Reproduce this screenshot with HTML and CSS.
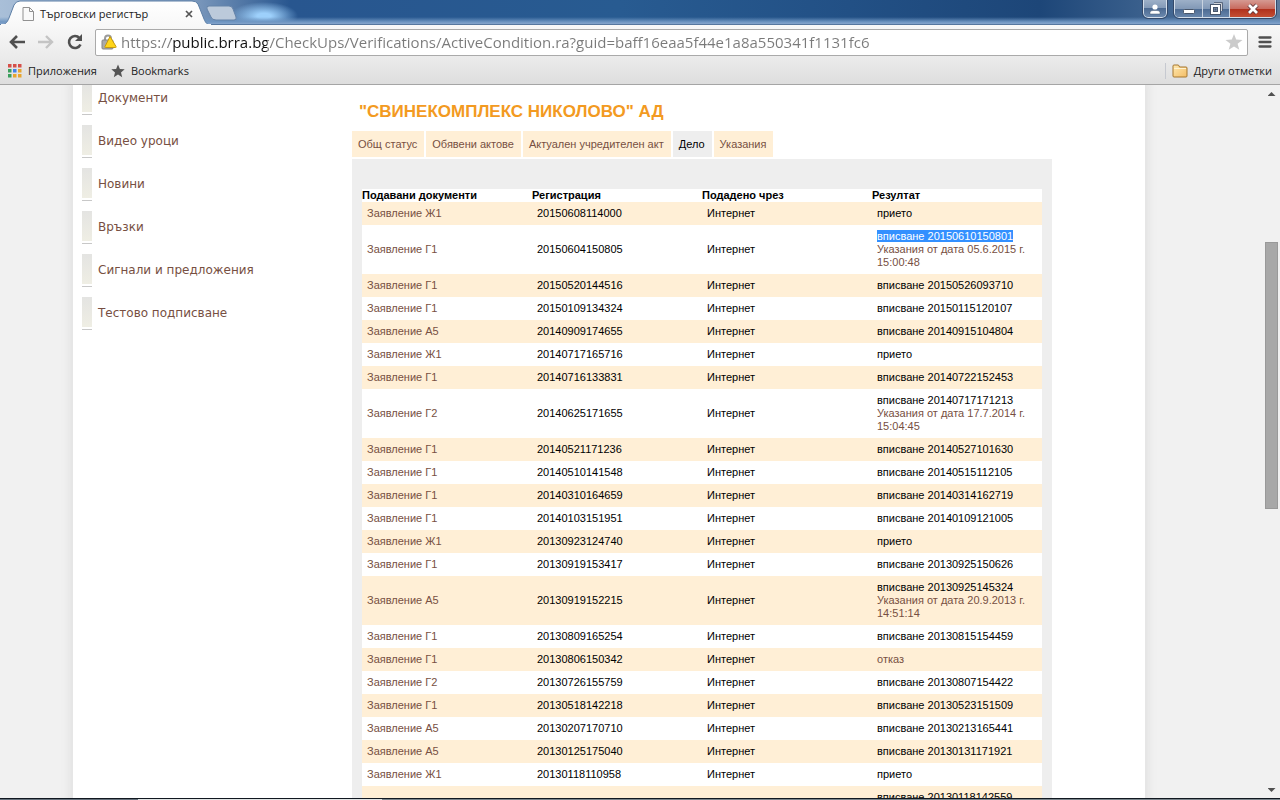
FILE: index.html
```html
<!DOCTYPE html>
<html lang="bg">
<head>
<meta charset="utf-8">
<title>Търговски регистър</title>
<link rel="stylesheet" href="styles.css">
</head>
<body>
<div class="browser">
  <header class="titlebar">
    <div class="tab">
      <svg class="tab-shape" width="212" height="25" viewBox="0 0 212 25" aria-hidden="true">
        <defs><linearGradient id="tabfill" x1="0" y1="0" x2="0" y2="1"><stop offset="0" stop-color="#fff"/><stop offset="1" stop-color="#f8f8f8"/></linearGradient></defs>
        <path d="M0 25C5 25 7 23 9 18L14 5Q16 1 20 1H192Q196 1 198 4L204 19C206 24 208 25 212 25Z" fill="url(#tabfill)" stroke="#5d7fa6" stroke-width="1"/>
        <path d="M1 25H211" stroke="#f8f8f8" stroke-width="2"/>
      </svg>
      <svg class="tab-page" width="12" height="14" viewBox="0 0 12 14" aria-hidden="true"><path d="M1 .5H7.500L11.500 4.500V13.500H1Z M7.500.5V4.500H11.500" fill="#fafafa" stroke="#919191"/></svg>
      <span class="tab-title">Търговски регистър</span>
      <button class="tab-close" aria-label="Затваряне"><svg width="8" height="8" viewBox="0 0 8 8"><path d="M1 1L7 7M7 1L1 7" stroke="#555" stroke-width="1.700"/></svg></button>
    </div>
    <button class="new-tab" aria-label="Нов раздел"><svg width="32" height="16" viewBox="0 0 32 16"><path d="M3 1H23Q26 1 27 4L30 12Q31 15 28 15H10Q6 15 5 12L1 4Q0 1 3 1Z" fill="#bccadb" stroke="#6583a8"/></svg></button>
    <div class="window-buttons">
      <button class="win user" aria-label="Потребител"><svg width="12" height="12" viewBox="0 0 12 12"><circle cx="6" cy="4" r="2.600" fill="#fff"/><path d="M1 11V9.500Q1 7.500 4 7.500H8Q11 7.500 11 9.500V11Z" fill="#fff" stroke="#445873" stroke-width=".5"/></svg></button>
      <div class="win-group">
        <button class="win" aria-label="Минимизиране"><svg width="14" height="12" viewBox="0 0 14 12"><rect x="1.500" y="6.500" width="11" height="4" rx="1" fill="#fff" stroke="#48566b"/></svg></button>
        <button class="win" aria-label="Възстановяване"><svg width="14" height="14" viewBox="0 0 14 14"><path d="M5 2H12V9" fill="none" stroke="#48566b" stroke-width="3.500"/><path d="M5 2H12V9" fill="none" stroke="#fff" stroke-width="1.500"/><rect x="3" y="4" width="7" height="7" fill="#7e96b4" stroke="#48566b" stroke-width="4"/><rect x="3" y="4" width="7" height="7" fill="none" stroke="#fff" stroke-width="2"/><rect x="5.500" y="6.500" width="2" height="2" fill="#48566b"/></svg></button>
        <button class="win close" aria-label="Затваряне на прозореца"><svg width="14" height="12" viewBox="0 0 14 12"><path d="M3 2L11 10M11 2L3 10" stroke="#5d3438" stroke-width="4.500"/><path d="M3 2L11 10M11 2L3 10" stroke="#fff" stroke-width="2.800"/></svg></button>
      </div>
    </div>
  </header>

  <div class="toolbar">
    <button class="tool" aria-label="Назад"><svg width="18" height="16" viewBox="0 0 18 16"><path d="M17 8H3M9 2L3 8L9 14" fill="none" stroke="#505050" stroke-width="2.600"/></svg></button>
    <button class="tool" aria-label="Напред"><svg width="18" height="16" viewBox="0 0 18 16"><path d="M1 8H15M9 2L15 8L9 14" fill="none" stroke="#c4c4c4" stroke-width="2.400"/></svg></button>
    <button class="tool" aria-label="Презареждане"><svg width="18" height="16" viewBox="0 0 18 16"><path d="M13.500 4A6 6 0 1 0 14.500 10.500" fill="none" stroke="#505050" stroke-width="2.600"/><path d="M16 0V7H9Z" fill="#505050"/></svg></button>
    <label class="address">
      <svg width="16" height="16" viewBox="0 0 16 16" aria-hidden="true"><path d="M4 7V4.500Q4 1.500 7 1.500T10 4.500V7" fill="none" stroke="#9b9b9b" stroke-width="2"/><rect x="1" y="6" width="11" height="9" rx="1" fill="#aaa" stroke="#858585"/><path d="M9 2.500L15 12.500Q15.500 13.500 14.500 13.500H4.500Q3.500 13.500 4 12.500Z" fill="#ffd51a" stroke="#c49a10"/></svg>
      <input class="url" type="text" aria-label="Адрес" spellcheck="false" value="https://public.brra.bg/CheckUps/Verifications/ActiveCondition.ra?guid=baff16eaa5f44e1a8a550341f1131fc6">
      <svg width="18" height="18" viewBox="0 0 18 18" aria-hidden="true"><path d="M9 1L11.200 6.500L17.500 6.900L12.600 10.700L14.300 16.800L9 13.400L3.700 16.800L5.400 10.700L.5 6.900L6.800 6.500Z" fill="#cbcbcb"/></svg>
    </label>
    <button class="tool menu-button" aria-label="Меню"><svg width="14" height="14" viewBox="0 0 14 14"><path d="M1.500 2.500H12.500M1.500 7H12.500M1.500 11.500H12.500" stroke="#505050" stroke-width="2.300" stroke-linecap="round"/></svg></button>
  </div>

  <nav class="bookmarks" aria-label="Отметки">
    <a href="#"><svg width="14" height="14" viewBox="0 0 14 14" aria-hidden="true"><path d="M0 0h3.500v3.500H0zM5 0h3.500v3.500H5zM10 0h3.500v3.500H10z" fill="#d64f49"/><path d="M0 5h3.500v3.500H0zM0 10h3.500v3.500H0z" fill="#3b9f5c"/><path d="M5 5h3.500v3.500H5z" fill="#4382e8"/><path d="M10 5h3.500v3.500H10zM5 10h3.500v3.500H5zM10 10h3.500v3.500H10z" fill="#e8a52e"/></svg>Приложения</a>
    <a href="#"><svg width="14" height="14" viewBox="0 0 14 14" aria-hidden="true"><path d="M7 .5L8.900 5L13.700 5.300L10 8.400L11.200 13.200L7 10.500L2.800 13.200L4 8.400L.3 5.300L5.100 5Z" fill="#555"/></svg>Bookmarks</a>
    <a class="other" href="#"><svg width="16" height="14" viewBox="0 0 16 14" aria-hidden="true"><defs><linearGradient id="folder" x1="0" y1="0" x2="1" y2="1"><stop offset="0" stop-color="#ffe9b0"/><stop offset="1" stop-color="#f3bd66"/></linearGradient></defs><path d="M1 12V2Q1 1 2 1H6Q7 1 7.500 3H14Q15 3 15 4V12Q15 13 14 13H2Q1 13 1 12Z" fill="url(#folder)" stroke="#a6762e"/><path d="M2 4.500H14" stroke="#fff2d0"/></svg>Други отметки</a>
  </nav>

  <div class="viewport">
    <div class="site">
      <div class="sheet">
        <nav class="side" aria-label="Меню">
          <a href="#">Документи</a>
          <a href="#">Видео уроци</a>
          <a href="#">Новини</a>
          <a href="#">Връзки</a>
          <a href="#">Сигнали и предложения</a>
          <a href="#">Тестово подписване</a>
        </nav>
        <main class="main">
          <h1>"СВИНЕКОМПЛЕКС НИКОЛОВО" АД</h1>
          <nav class="tabs" aria-label="Раздели">
            <a href="#">Общ статус</a>
            <a href="#">Обявени актове</a>
            <a href="#">Актуален учредителен акт</a>
            <a class="current" href="#" aria-current="page">Дело</a>
            <a href="#">Указания</a>
          </nav>
          <section class="panel">
            <table class="docs">
              <thead><tr><th>Подавани документи</th><th>Регистрация</th><th>Подадено чрез</th><th>Резултат</th></tr></thead>
              <tbody>
                <tr><td><a href="#">Заявление Ж1</a></td><td>20150608114000</td><td>Интернет</td><td>прието</td></tr>
                <tr><td><a href="#">Заявление Г1</a></td><td>20150604150805</td><td>Интернет</td><td><span class="selected">вписване 20150610150801</span><br><a href="#">Указания от дата 05.6.2015 г. 15:00:48</a></td></tr>
                <tr><td><a href="#">Заявление Г1</a></td><td>20150520144516</td><td>Интернет</td><td>вписване 20150526093710</td></tr>
                <tr><td><a href="#">Заявление Г1</a></td><td>20150109134324</td><td>Интернет</td><td>вписване 20150115120107</td></tr>
                <tr><td><a href="#">Заявление А5</a></td><td>20140909174655</td><td>Интернет</td><td>вписване 20140915104804</td></tr>
                <tr><td><a href="#">Заявление Ж1</a></td><td>20140717165716</td><td>Интернет</td><td>прието</td></tr>
                <tr><td><a href="#">Заявление Г1</a></td><td>20140716133831</td><td>Интернет</td><td>вписване 20140722152453</td></tr>
                <tr><td><a href="#">Заявление Г2</a></td><td>20140625171655</td><td>Интернет</td><td>вписване 20140717171213<br><a href="#">Указания от дата 17.7.2014 г. 15:04:45</a></td></tr>
                <tr><td><a href="#">Заявление Г1</a></td><td>20140521171236</td><td>Интернет</td><td>вписване 20140527101630</td></tr>
                <tr><td><a href="#">Заявление Г1</a></td><td>20140510141548</td><td>Интернет</td><td>вписване 20140515112105</td></tr>
                <tr><td><a href="#">Заявление Г1</a></td><td>20140310164659</td><td>Интернет</td><td>вписване 20140314162719</td></tr>
                <tr><td><a href="#">Заявление Г1</a></td><td>20140103151951</td><td>Интернет</td><td>вписване 20140109121005</td></tr>
                <tr><td><a href="#">Заявление Ж1</a></td><td>20130923124740</td><td>Интернет</td><td>прието</td></tr>
                <tr><td><a href="#">Заявление Г1</a></td><td>20130919153417</td><td>Интернет</td><td>вписване 20130925150626</td></tr>
                <tr><td><a href="#">Заявление А5</a></td><td>20130919152215</td><td>Интернет</td><td>вписване 20130925145324<br><a href="#">Указания от дата 20.9.2013 г. 14:51:14</a></td></tr>
                <tr><td><a href="#">Заявление Г1</a></td><td>20130809165254</td><td>Интернет</td><td>вписване 20130815154459</td></tr>
                <tr><td><a href="#">Заявление Г1</a></td><td>20130806150342</td><td>Интернет</td><td><a href="#">отказ</a></td></tr>
                <tr><td><a href="#">Заявление Г2</a></td><td>20130726155759</td><td>Интернет</td><td>вписване 20130807154422</td></tr>
                <tr><td><a href="#">Заявление Г1</a></td><td>20130518142218</td><td>Интернет</td><td>вписване 20130523151509</td></tr>
                <tr><td><a href="#">Заявление А5</a></td><td>20130207170710</td><td>Интернет</td><td>вписване 20130213165441</td></tr>
                <tr><td><a href="#">Заявление А5</a></td><td>20130125175040</td><td>Интернет</td><td>вписване 20130131171921</td></tr>
                <tr><td><a href="#">Заявление Ж1</a></td><td>20130118110958</td><td>Интернет</td><td>прието</td></tr>
                <tr><td></td><td></td><td></td><td>вписване 20130118142559</td></tr>
              </tbody>
            </table>
          </section>
        </main>
      </div>
    </div>
    <div class="scrollbar" aria-hidden="true">
      <span class="arrow up"></span>
      <span class="before"></span>
      <span class="thumb"></span>
      <span class="after"></span>
      <span class="arrow down"></span>
    </div>
  </div>
  <div class="taskbar"></div>
</div>
</body>
</html>
```
FILE: styles.css
```css
* { box-sizing: border-box; }
body { margin: 0; font: 11px/13px "Liberation Sans", Arial, sans-serif; color: #000; }
a { color: #774f42; text-decoration: none; }
button { border: 0; padding: 0; background: none; display: flex; align-items: center; justify-content: center; }
svg { display: block; flex: none; }

.browser { display: flex; flex-direction: column; height: 100vh; overflow: hidden; }

/* Window frame */
.titlebar {
  flex: none; display: flex; align-items: flex-start; height: 25px; padding: 0 4px 0 0;
  border-bottom: 1px solid #56779f;
  background:
    linear-gradient(to bottom, transparent 17px, #6f96c2 22px, #86a5cb 24px),
    radial-gradient(ellipse 34px 14px at 264px 16px, #9dd0fb 20%, transparent),
    linear-gradient(to right, #a9bfd8 0, #7795ba 200px, #28568f 290px, #285b91 620px, #225085 850px, #1d4678 1040px, #3f6490 1160px, #5c7a9c 100%);
}
.tab { position: relative; display: flex; align-items: center; width: 206px; height: 25px; padding: 2px 12px 0 22px; font: 11px/16px "Open Sans", sans-serif; color: #222; }
.tab-shape { position: absolute; left: 0; top: 0; }
.tab-page, .tab-title, .tab-close { position: relative; }
.tab-title { flex: 1; margin-left: 6px; white-space: nowrap; }
.tab-close { width: 10px; height: 12px; }
.new-tab { margin-top: 5px; }
.window-buttons { display: flex; gap: 7px; margin-left: auto; }
.win { width: 27px; height: 18px; background: linear-gradient(#9db0c8 0, #8198b6 50%, #4c6a92 50%, #6b89ae); }
.user { width: 24px; border: 1px solid #d3deea; border-top: 0; border-radius: 0 0 5px 5px; outline: 1px solid #34496a; }
.win-group { display: flex; border: 1px solid #d3deea; border-top: 0; border-radius: 0 0 5px 5px; overflow: hidden; outline: 1px solid #34496a; height: 18px; }
.win-group .win + .win { border-left: 1px solid #c8d3e0; }
.win-group .close { width: 46px; background: linear-gradient(#d59a92 0, #c8695c 50%, #b0301c 50%, #c65236); }

.toolbar { flex: none; display: flex; align-items: center; height: 32px; padding: 2px 8px 0 8px; background: linear-gradient(#f8f8f8, #ebebeb); }
.tool { width: 18px; margin-right: 11px; }
.address {
  flex: 1; display: flex; align-items: center; height: 27px; padding: 0 4px 0 5px;
  border: 1px solid #aaa; border-radius: 2px; background: #fff;
}
.url {
  flex: 1; min-width: 0; height: 25px; padding: 0 0 0 4px; border: 0; outline: 0;
  font: 15px/24px "Open Sans", sans-serif; color: #7a7a7a;
  background: linear-gradient(to right, #7a7a7a 54px, #111 54px, #111 150px, #7a7a7a 150px);
  -webkit-background-clip: text; background-clip: text; -webkit-text-fill-color: transparent;
}
.menu-button { width: 14px; margin: 0 0 0 10px; }

.bookmarks { flex: none; display: flex; align-items: center; gap: 14px; height: 28px; padding: 0 8px; border-bottom: 1px solid #a5a5a5; background: linear-gradient(#ebebeb, #dedede); font: 11px/16px "Open Sans", sans-serif; }
.bookmarks a { display: flex; align-items: center; gap: 6px; color: #222; white-space: nowrap; }
.bookmarks .other { margin-left: auto; padding-left: 6px; border-left: 1px solid #c6c9d0; }

/* Page */
.viewport { flex: 1; min-height: 0; display: flex; background: #f1f1f1; }
.site { flex: 1; min-width: 0; overflow: hidden; padding: 0 119px 0 73px; }
.sheet { display: flex; min-height: 100%; padding-right: 93px; background: #fff; box-shadow: 0 0 8px 4px #e3e3e3; }

.side { flex: none; display: flex; flex-direction: column; gap: 11px; width: 279px; padding-left: 9px; margin-top: -3px; }
.side a { display: flex; align-items: center; gap: 6px; height: 32px; font: 12px/16px "DejaVu Sans", Verdana, sans-serif; }
.side a::before { content: ""; width: 10px; height: 32px; border-bottom: 1px solid #c8c8c8; background: linear-gradient(#e4e4e2, #efeee4 30px, #fff 30px); }

.main { flex: 1; min-width: 0; }
h1 { margin: 0; padding: 17px 7px 9px; font-size: 17px; line-height: 20px; color: #f39a21; }
.tabs { display: flex; gap: 2px; margin-bottom: 2px; }
.tabs a { padding: 7px 7px 6px 6px; background: #ffefd6; white-space: nowrap; }
.tabs .current { color: #000; background: #eee; }
.panel { padding: 30px 10px; background: #eee; }
.docs { width: 100%; table-layout: fixed; border-collapse: collapse; background: #fff; }
.docs th { padding: 0; text-align: left; }
.docs td { padding: 5px; vertical-align: middle; }
.docs tbody tr:nth-child(odd) { background: #ffefd6; }
.selected { color: #fff; background: #3390ff; }

.scrollbar { flex: none; display: flex; flex-direction: column; align-items: center; width: 16px; padding-right: 1px; }
.arrow { width: 8px; height: 4px; margin: 7px 0 6px; background: #505050; }
.up { clip-path: polygon(50% 0, 100% 100%, 0 100%); }
.down { clip-path: polygon(0 0, 100% 0, 50% 100%); }
.before { flex: 140; }
.thumb { flex: 266; width: 13px; border: 1px solid #999; background: #a8a8a8; }
.after { flex: 273; }
.taskbar { flex: none; height: 2px; border-top: 1px solid #111820; background: linear-gradient(to right, #66717c 138px, #e0e4e4 138px, #e0e4e4 382px, #7a858c 382px); }
```
